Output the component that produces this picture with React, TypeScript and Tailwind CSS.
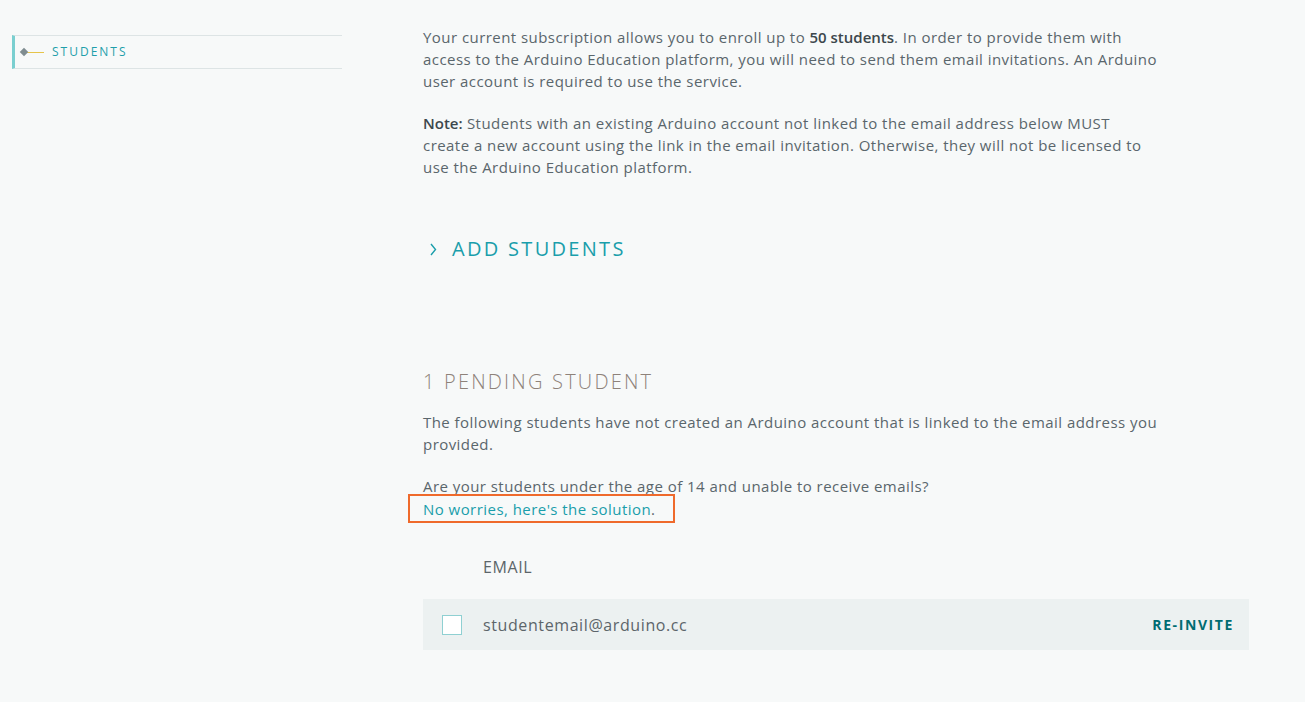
import React from "react";

const font = { fontFamily: '"Open Sans", "Noto Sans", sans-serif' };

function Sidebar() {
  return (
    <aside className="w-[330px] shrink-0 pt-[35px]">
      <div className="flex h-[34px] items-center border-y border-[#dde4e5] border-l-[3px] border-l-[#7acfd0]">
        <span className="ml-[6px] flex items-center">
          <span className="h-[6px] w-[6px] rotate-45 bg-[#7f8c90]" />
          <span className="h-px w-[17px] bg-[#e6c44a]" />
        </span>
        <span className="ml-[8px] text-[12px] tracking-[2px] text-[#1f9fab]">STUDENTS</span>
      </div>
    </aside>
  );
}

export default function App() {
  return (
    <div className="min-h-screen bg-[#f7f9f9] text-[#5a666c]" style={font}>
      <div className="flex pl-[12px]">
        <Sidebar />
        <main className="ml-[81px] w-[826px] pt-[26px]">
          <div className="w-[760px] text-[15px] leading-[22px] tracking-[0.45px]">
            <p>
              Your current subscription allows you to enroll up to{" "}
              <b className="font-semibold tracking-normal text-[#3c474c]">50 students</b>. In order to provide them
              with
              <br />
              access to the Arduino Education platform, you will need to send them email invitations. An Arduino
              <br />
              user account is required to use the service.
            </p>
            <p className="mt-[20px]">
              <b className="font-semibold tracking-normal text-[#3c474c]">Note:</b> Students with an existing
              Arduino account not linked to the email address below MUST
              <br />
              create a new account using the link in the email invitation. Otherwise, they will not be licensed to
              <br />
              use the Arduino Education platform.
            </p>
          </div>

          <button className="mt-[56px] flex items-center text-[#1a9eab]">
            <svg className="ml-[7px]" width="7" height="13" viewBox="0 0 7 13" fill="none">
              <path d="M1 1 L5.5 6.5 L1 12" stroke="#1a9eab" strokeWidth="1.4" />
            </svg>
            <span className="ml-[15px] text-[20px] tracking-[2.3px]">ADD STUDENTS</span>
          </button>

          <h2 className="mt-[103px] text-[20px] font-light tracking-[2.2px] text-[#8e827a]">
            1 PENDING STUDENT
          </h2>
          <div className="w-[760px] text-[15px] leading-[22px] tracking-[0.45px]">
            <p className="mt-[14px]">
              The following students have not created an Arduino account that is linked to the email address you
              <br />
              provided.
            </p>
            <p className="mt-[20px]">Are your students under the age of 14 and unable to receive emails?</p>
            <div className="-ml-[15px] mt-[-3px] inline-block border-2 border-[#ef6a2c] py-[1.5px] pl-[13px] pr-[17px]">
              <a className="text-[#1a9eab]">No worries, here's the solution</a>.
            </div>
          </div>

          <div className="mt-[32px] pl-[60px] text-[16px] tracking-[0.6px] text-[#5c656a]">EMAIL</div>
          <div className="mt-[20px] flex h-[51px] items-center bg-[#ecf1f1] pl-[19px] pr-[15px]">
            <span className="h-[20px] w-[20px] border border-[#8fd0d2] bg-white" />
            <span className="ml-[21px] text-[16px] tracking-[0.6px] text-[#5c656a]">studentemail@arduino.cc</span>
            <span className="ml-auto text-[14px] font-bold tracking-[1.6px] text-[#006c72]">RE-INVITE</span>
          </div>
        </main>
      </div>
    </div>
  );
}
